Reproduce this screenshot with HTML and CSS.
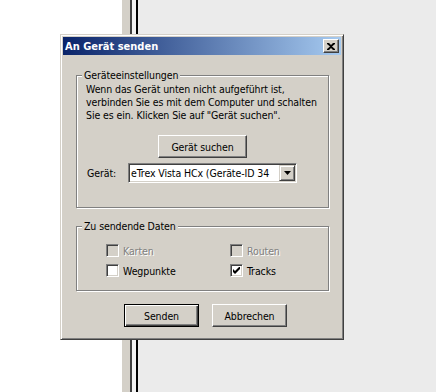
FILE: index.html
```html
<!DOCTYPE html>
<html lang="de">
<head>
  <meta charset="UTF-8">
  <meta name="viewport" content="width=device-width, initial-scale=1.0">
  <title>An Gerät senden</title>
  <link rel="stylesheet" href="styles.css">
</head>
<body>
  <div class="desk">
    <div class="pane-left"></div>
    <div class="split">
      <div class="split-face"></div>
      <div class="split-dark"></div>
      <div class="split-light"></div>
      <div class="split-black"></div>
    </div>
    <div class="pane-right"></div>
  </div>

  <div class="dialog">
    <div class="titlebar">
      <span class="title">An Gerät senden</span>
      <button class="close-btn">
        <svg width="8" height="7" viewBox="0 0 8 7">
          <path d="M0 0h2l2 2 2-2h2v1L5 3.5 8 6v1H6L4 5 2 7H0V6l3-2.5L0 1z" fill="#000"/>
        </svg>
      </button>
    </div>

    <div class="dialog-body">
      <div class="group group-device">
        <span class="group-label">Geräteeinstellungen</span>
        <p class="hint">Wenn das Gerät unten nicht aufgeführt ist,<br>verbinden Sie es mit dem Computer und schalten<br>Sie es ein. Klicken Sie auf "Gerät suchen".</p>
        <div class="search-row">
          <button class="btn btn-search">Gerät suchen</button>
        </div>
        <div class="device-row">
          <span class="device-label">Gerät:</span>
          <div class="combo">
            <span class="combo-text">eTrex Vista HCx (Geräte-ID 34</span>
            <span class="combo-arrow">
              <svg width="7" height="4" viewBox="0 0 7 4"><path d="M0 0h7L3.5 4z" fill="#000"/></svg>
            </span>
          </div>
        </div>
      </div>

      <div class="group group-data">
        <span class="group-label">Zu sendende Daten</span>
        <div class="check-grid">
          <div class="check disabled"><span class="box"></span>Karten</div>
          <div class="check disabled"><span class="box"></span>Routen</div>
          <div class="check"><span class="box on"></span>Wegpunkte</div>
          <div class="check">
            <span class="box on">
              <svg width="7" height="7" viewBox="0 0 7 7"><path d="M0 2v3l2 2 5-5V-1L2 4z" fill="#000"/></svg>
            </span>Tracks
          </div>
        </div>
      </div>

      <div class="actions">
        <button class="btn btn-default">Senden</button>
        <button class="btn">Abbrechen</button>
      </div>
    </div>
  </div>
</body>
</html>
```

FILE: styles.css
```css
body {
  margin: 0;
  font-family: "DejaVu Sans Condensed", "DejaVu Sans", sans-serif;
  font-size: 10.5px;
  letter-spacing: -0.1px;
  color: #000;
  background-color: #ebebeb;
  overflow: hidden;
}

/* background window behind the dialog */
.desk {
  display: flex;
  height: 392px;
}

.pane-left {
  width: 122px;
  background-color: #fff;
}

.split {
  display: flex;
}

.split-face {
  width: 8px;
  background-color: #d4d0c8;
}

.split-dark {
  width: 2px;
  background-color: #404040;
}

.split-light {
  width: 4px;
  background-color: #f2f2f2;
}

.split-black {
  width: 2px;
  background-color: #000;
}

.pane-right {
  flex: 1;
  background-color: #ebebeb;
}

/* dialog window */
.dialog {
  position: absolute;
  left: 60px;
  top: 34px;
  width: 284px;
  height: 306px;
  box-sizing: border-box;
  padding: 2px;
  background-color: #d4d0c8;
  border: 1px solid;
  border-color: #d4d0c8 #404040 #404040 #d4d0c8;
  box-shadow: inset 1px 1px 0 #fff, inset -1px -1px 0 #808080;
}

.titlebar {
  height: 18px;
  display: flex;
  align-items: center;
  justify-content: space-between;
  padding: 0 2px 0 2px;
  background: linear-gradient(to right, #0a246a, #a6caf0);
}

.title {
  color: #fff;
  font-size: 11px;
  font-weight: bold;
  letter-spacing: 0;
}

.close-btn {
  width: 16px;
  height: 14px;
  padding: 0;
  display: flex;
  align-items: center;
  justify-content: center;
  background-color: #d4d0c8;
  border: 1px solid;
  border-color: #fff #404040 #404040 #fff;
  box-shadow: inset -1px -1px 0 #808080;
}

.dialog-body {
  padding: 20px 0 0 13px;
}

.group {
  position: relative;
  width: 253px;
  box-sizing: border-box;
  border: 1px solid #808080;
  box-shadow: inset 1px 1px 0 #fff, 1px 1px 0 #fff;
}

.group-label {
  position: absolute;
  top: -7px;
  left: 5px;
  padding: 0 2px;
  line-height: 13px;
  background-color: #d4d0c8;
}

.group-device {
  padding: 7px 9px 24px 9px;
}

.hint {
  margin: 0;
  line-height: 13px;
  white-space: nowrap;
}

.search-row {
  display: flex;
  justify-content: center;
  margin-top: 13px;
}

.btn {
  width: 75px;
  height: 23px;
  padding: 0;
  font-family: inherit;
  font-size: inherit;
  letter-spacing: inherit;
  color: #000;
  background-color: #d4d0c8;
  border: 1px solid;
  border-color: #fff #404040 #404040 #fff;
  box-shadow: inset -1px -1px 0 #808080;
}

.btn-search {
  width: 89px;
}

.btn-default {
  border: 1px solid #000;
  box-shadow: inset 1px 1px 0 #fff, inset -1px -1px 0 #404040, inset -2px -2px 0 #808080;
}

.device-row {
  display: flex;
  align-items: center;
  margin-top: 5px;
}

.device-label {
  width: 42px;
  padding-left: 1px;
  box-sizing: border-box;
}

.combo {
  width: 169px;
  height: 20px;
  box-sizing: border-box;
  display: flex;
  align-items: center;
  background-color: #fff;
  border: 1px solid;
  border-color: #808080 #fff #fff #808080;
  box-shadow: inset 1px 1px 0 #404040, inset -1px -1px 0 #d4d0c8;
  padding: 1px;
}

.combo-text {
  flex: 1;
  overflow: hidden;
  white-space: nowrap;
  padding-left: 1px;
}

.combo-arrow {
  width: 16px;
  height: 16px;
  box-sizing: border-box;
  display: flex;
  align-items: center;
  justify-content: center;
  background-color: #d4d0c8;
  border: 1px solid;
  border-color: #d4d0c8 #404040 #404040 #d4d0c8;
  box-shadow: inset 1px 1px 0 #fff, inset -1px -1px 0 #808080;
}

.group-data {
  margin-top: 18px;
  height: 65px;
  padding: 17px 0 0 29px;
}

.check-grid {
  display: grid;
  grid-template-columns: 124px 1fr;
  row-gap: 7px;
}

.check {
  display: flex;
  align-items: center;
  gap: 4px;
  height: 13px;
}

.check.disabled {
  color: #808080;
  text-shadow: 1px 1px 0 #fff;
}

.box {
  width: 13px;
  height: 13px;
  box-sizing: border-box;
  display: flex;
  align-items: center;
  justify-content: center;
  background-color: #d4d0c8;
  border: 1px solid;
  border-color: #808080 #fff #fff #808080;
  box-shadow: inset 1px 1px 0 #404040, inset -1px -1px 0 #d4d0c8;
}

.box.on {
  background-color: #fff;
}

.actions {
  display: flex;
  gap: 13px;
  margin-top: 13px;
  padding-left: 48px;
}
```
